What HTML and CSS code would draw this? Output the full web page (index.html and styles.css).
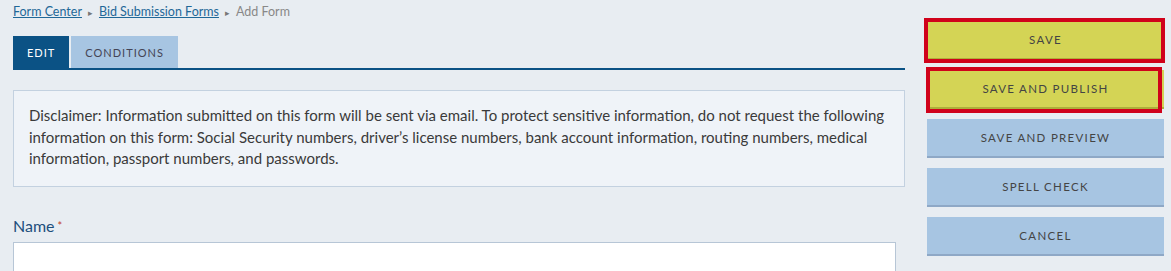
FILE: index.html
```html
<!DOCTYPE html>
<html>
<head>
<meta charset="utf-8">
<link rel="stylesheet" href="styles.css">
</head>
<body>
<div class="page">
  <main class="main">
    <nav class="crumbs">
      <a href="#">Form Center</a><span class="sep">&#9656;</span><a href="#">Bid Submission Forms</a><span class="sep">&#9656;</span><span class="current">Add Form</span>
    </nav>
    <div class="tabs">
      <span class="tab active">EDIT</span>
      <span class="tab">CONDITIONS</span>
    </div>
    <div class="disclaimer">Disclaimer: Information submitted on this form will be sent via email. To protect sensitive information, do not request the following information on this form: Social Security numbers, driver’s license numbers, bank account information, routing numbers, medical information, passport numbers, and passwords.</div>
    <label class="label">Name<span class="req">*</span></label>
    <div class="input"></div>
  </main>
  <aside class="actions">
    <div class="btn yellow hl hl-save">SAVE</div>
    <div class="btn yellow hl hl-pub">SAVE AND PUBLISH</div>
    <div class="btn">SAVE AND PREVIEW</div>
    <div class="btn">SPELL CHECK</div>
    <div class="btn">CANCEL</div>
  </aside>
</div>
</body>
</html>
```
FILE: styles.css
```css
html, body { margin: 0; padding: 0; background: #e8edf2; height: 100%; overflow: hidden; }
body { font-family: Lato, "Noto Sans", sans-serif; color: #333; }
.page { display: flex; gap: 22px; padding: 0 7px 0 13px; }
.main { width: 892px; flex: none; }
.crumbs { font-size: 12.5px; line-height: 14px; padding-top: 5px; color: #888; }
.crumbs a { color: #1f6898; text-decoration: underline; }
.crumbs .sep { font-size: 9px; color: #777; margin: 0 6px; }
.tabs { display: flex; gap: 2px; margin-top: 16px; border-bottom: 2px solid #0b5285; height: 32px; }
.tab { display: flex; align-items: center; padding: 0 14px; font-size: 11px; letter-spacing: 1px; background: #a7c5e2; color: #445; }
.tab.active { background: #0b5285; color: #fff; }
.disclaimer { margin-top: 20px; background: #eff3f8; border: 1px solid #c3d1e0; padding: 14px 15px 16px; font-size: 15px; line-height: 21.5px; color: #3a3a3a; }
.label { display: block; margin-top: 29px; font-size: 16px; line-height: 20px; color: #1d4f7c; }
.req { color: #c0392b; font-size: 11px; vertical-align: top; margin-left: 3px; }
.input { margin-top: 6px; width: 881px; height: 40px; background: #fff; border: 1px solid #b7c6d6; }
.actions { width: 237px; flex: none; display: flex; flex-direction: column; gap: 10px; padding-top: 21px; }
.btn { position: relative; height: 37px; border-bottom: 2px solid #8ea8c6; background: #a7c5e2; display: flex; align-items: center; justify-content: center; font-size: 11.5px; letter-spacing: 1.3px; color: #444; }
.btn.yellow { background: #d4d455; border-bottom-color: #aeae3a; }
.hl::after { content: ""; position: absolute; border: 4px solid #d0021b; pointer-events: none; }
.hl-save::after { left: -3px; right: -1px; top: -3px; bottom: -5px; }
.hl-pub::after { left: -1px; right: 2px; top: -3px; bottom: -6px; }
```
